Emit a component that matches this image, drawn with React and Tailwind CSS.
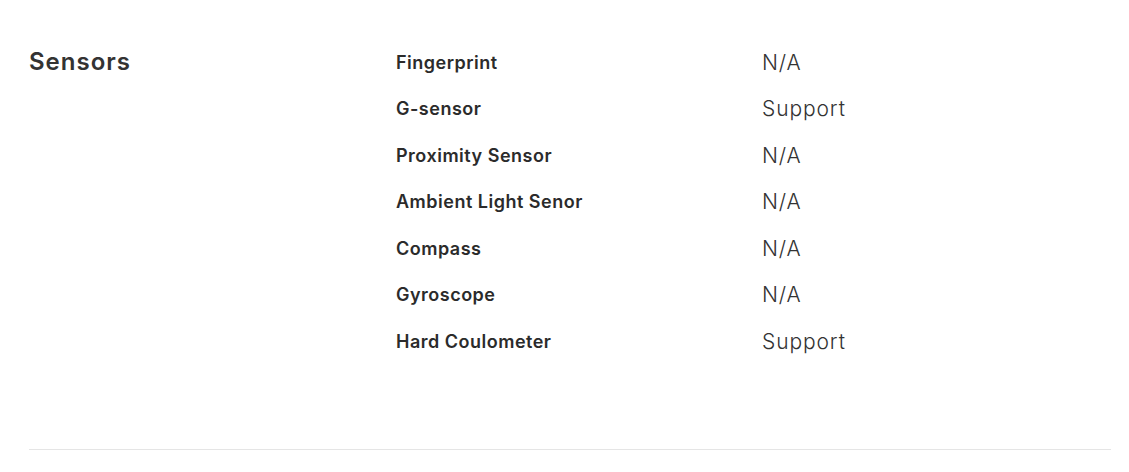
const rows = [
  ["Fingerprint", "N/A"],
  ["G-sensor", "Support"],
  ["Proximity Sensor", "N/A"],
  ["Ambient Light Senor", "N/A"],
  ["Compass", "N/A"],
  ["Gyroscope", "N/A"],
  ["Hard Coulometer", "Support"],
];

export default function App() {
  return (
    <div className="min-h-screen bg-white pl-[29px] pr-[18px] pt-[39px] text-[#333] font-['Inter',sans-serif]">
      <div className="flex border-b border-[#e5e5e5] pb-[84px]">
        <h2 className="w-[367px] shrink-0 text-[24px] font-semibold leading-[46.5px] tracking-[1px] text-[#333]">
          Sensors
        </h2>
        <div className="flex-1">
          {rows.map(([label, value]) => (
            <div key={label} className="flex h-[46.5px] items-center">
              <span className="w-[366px] shrink-0 text-[18px] font-semibold tracking-[0.5px] text-[#2b2b2b]">
                {label}
              </span>
              <span className="text-[21px] font-light tracking-[0.9px] text-[#333]">{value}</span>
            </div>
          ))}
        </div>
      </div>
    </div>
  );
}
